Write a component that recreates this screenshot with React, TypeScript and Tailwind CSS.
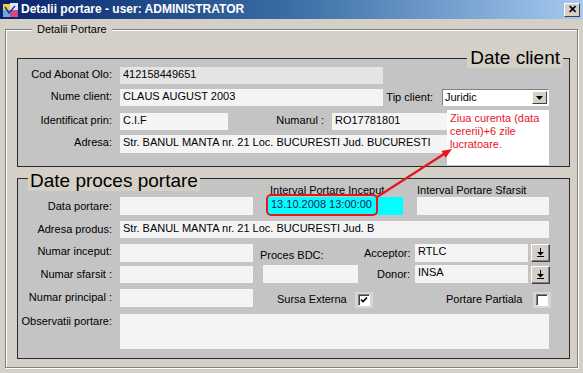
import React from 'react';

const base = "font-['Liberation_Sans',Arial,sans-serif] text-[11px] leading-[13px] text-black";

function Label({ w = 94, className = '', children }: { w?: number; className?: string; children: React.ReactNode }) {
  return (
    <div className={`shrink-0 text-right whitespace-nowrap ${className}`} style={{ width: w }}>
      {children}
    </div>
  );
}

function Box({ w, h = 17, bg = 'bg-[#f4f4f4]', className = '', children }: { w: number; h?: number; bg?: string; className?: string; children?: React.ReactNode }) {
  return (
    <div className={`shrink-0 overflow-hidden whitespace-nowrap pl-[3px] pt-[1px] ${bg} ${className}`} style={{ width: w, height: h }}>
      {children}
    </div>
  );
}

function DropButton() {
  return (
    <div className="ml-[3px] flex h-[18px] w-[19px] shrink-0 items-center justify-center border border-t-white border-l-white border-r-[#404040] border-b-[#404040] bg-[#d4d0c8] shadow-[inset_-1px_-1px_0_#808080]">
      <svg width="9" height="10" viewBox="0 0 9 10">
        <rect x="4" y="0" width="1" height="4" fill="#000" />
        <polygon points="1,4 8,4 4.5,7.5" fill="#000" />
        <rect x="1" y="8" width="7" height="1" fill="#000" />
      </svg>
    </div>
  );
}

function Check({ checked }: { checked?: boolean }) {
  return (
    <div className="flex h-[16px] w-[18px] shrink-0 items-center justify-center bg-[#d6d6d6]">
      <div className="flex h-[12px] w-[12px] items-center justify-center border border-t-[#808080] border-l-[#808080] border-r-white border-b-white bg-white shadow-[inset_1px_1px_0_#404040]">
        {checked && (
          <svg width="8" height="8" viewBox="0 0 8 8">
            <path d="M1 3.5 L3 5.5 L7 1.5" stroke="#000" strokeWidth="1.6" fill="none" />
          </svg>
        )}
      </div>
    </div>
  );
}

export default function App() {
  return (
    <div className={`relative h-[373px] w-[583px] overflow-hidden bg-[#d4d0c8] ${base}`}>
      {/* title bar */}
      <div className="flex h-[19px] items-center bg-gradient-to-r from-[#0a246a] via-[#3a6ea5] to-[#a6caf0] pl-[3px] pr-[3px]">
        <svg width="15" height="14" viewBox="0 0 15 14" className="shrink-0">
          <rect x="0" y="1" width="7" height="6" fill="#f4d03f" />
          <rect x="7" y="0" width="8" height="7" fill="#e0e8ff" />
          <rect x="0" y="7" width="7" height="7" fill="#6fa8dc" />
          <rect x="7" y="7" width="8" height="7" fill="#d04a8a" />
          <path d="M2 4 L6 10 L12 3" stroke="#1a3a9a" strokeWidth="1.5" fill="none" />
        </svg>
        <span className="ml-[3px] font-bold text-[12px] text-white">Detalii portare - user: ADMINISTRATOR</span>
        <div className="ml-auto flex h-[14px] w-[16px] items-center justify-center border border-t-white border-l-white border-r-[#404040] border-b-[#404040] bg-[#d4d0c8] text-[11px] font-bold leading-none">
          ✕
        </div>
      </div>

      {/* outer group box */}
      <div className="relative ml-[5px] mt-[10px] h-[339px] w-[573px] border border-[#808080] pl-[11px] pt-[28px] shadow-[1px_1px_0_#fff,inset_1px_1px_0_#fff]">
        <div className="absolute left-[26px] top-[-7px] bg-[#d4d0c8] px-[5px]">Detalii Portare</div>

        {/* Date client */}
        <div className="relative h-[109px] w-[553px] border border-[#2a2a2a] bg-[#c4c4c4] pt-[8px]">
          <div className="absolute right-[6px] top-[-11px] bg-[#d4d0c8] px-[3px] text-[19px] leading-[20px]">Date client</div>

          <div className="flex items-start">
            <Label className="pt-[1px]">Cod Abonat Olo:</Label>
            <Box w={263} bg="bg-[#e4e4e4]" className="ml-[8px]">412158449651</Box>
          </div>
          <div className="mt-[5px] flex items-start">
            <Label className="pt-[1px]">Nume client:</Label>
            <Box w={263} className="ml-[8px]">CLAUS AUGUST 2003</Box>
            <Label w={50} className="pt-[2px]">Tip client:</Label>
            <div className="ml-[9px] flex h-[17px] w-[107px] items-center border border-t-[#808080] border-l-[#808080] border-r-white border-b-white bg-white pl-[2px]">
              <span className="flex-1">Juridic</span>
              <div className="mr-[1px] flex h-[13px] w-[15px] items-center justify-center border border-t-white border-l-white border-r-[#404040] border-b-[#404040] bg-[#d4d0c8]">
                <svg width="7" height="4" viewBox="0 0 7 4"><polygon points="0,0 7,0 3.5,4" fill="#000" /></svg>
              </div>
            </div>
          </div>
          <div className="mt-[7px] flex items-start">
            <Label className="pt-[1px]">Identificat prin:</Label>
            <Box w={108} className="ml-[8px]">C.I.F</Box>
            <Label w={57} className="ml-[39px] pt-[1px]">Numarul :</Label>
            <Box w={217} className="ml-[8px]">RO17781801</Box>
          </div>
          <div className="mt-[5px] flex items-start">
            <Label className="pt-[1px]">Adresa:</Label>
            <Box w={429} h={18} className="ml-[8px]">Str. BANUL MANTA nr. 21 Loc. BUCURESTI Jud. BUCURESTI</Box>
          </div>

          <div className="absolute left-[429px] top-[51px] h-[55px] w-[102px] bg-white pl-[3px] pt-[2px] text-[#e8141e]">
            Ziua curenta (data cererii)+6 zile lucratoare.
          </div>
        </div>

        {/* Date proces portare */}
        <div className="relative mt-[11px] h-[181px] w-[553px] border border-[#2a2a2a] bg-[#c4c4c4]">
          <div className="absolute left-[10px] top-[-8px] bg-[#d4d0c8] px-[2px] text-[19px] leading-[20px]">Date proces portare</div>

          <div className="flex h-[18px] items-start pt-[5px] leading-[12px]">
            <div className="ml-[252px] w-[147px] whitespace-nowrap">Interval Portare Inceput</div>
            <div className="whitespace-nowrap">Interval Portare Sfarsit</div>
          </div>
          <div className="flex items-start">
            <Label className="pt-[3px]">Data portare:</Label>
            <Box w={133} h={18} className="ml-[8px]" />
            <Box w={135} h={18} bg="bg-[#00ffff]" className="ml-[15px] text-[#102060]">13.10.2008 13:00:00</Box>
            <Box w={132} h={18} className="ml-[14px]" />
          </div>
          <div className="mt-[6px] flex items-start">
            <Label className="pt-[2px]">Adresa produs:</Label>
            <Box w={429} className="ml-[8px]">Str. BANUL MANTA nr. 21 Loc. BUCURESTI Jud. B</Box>
          </div>
          <div className="mt-[6px] flex h-[18px] items-start">
            <Label className="pt-[1px]">Numar inceput:</Label>
            <Box w={133} h={18} className="ml-[8px]" />
            <div className="ml-[7px] w-[104px] self-end whitespace-nowrap">Proces BDC:</div>
            <Label w={46} className="pt-[3px]">Acceptor:</Label>
            <Box w={113} h={18} className="ml-[5px]">RTLC</Box>
            <DropButton />
          </div>
          <div className="mt-[4px] flex items-start">
            <Label className="pt-[2px]">Numar sfarsit :</Label>
            <Box w={133} className="ml-[8px]" />
            <Box w={95} h={18} className="ml-[10px] -mt-[1px]" />
            <Label w={52} className="pt-[2px]">Donor:</Label>
            <Box w={113} h={18} className="ml-[5px] -mt-[1px]">INSA</Box>
            <DropButton />
          </div>
          <div className="mt-[5px] flex items-start">
            <Label className="pt-[2px]">Numar principal :</Label>
            <Box w={133} h={18} className="ml-[8px]" />
            <div className="ml-[24px] w-[78px] whitespace-nowrap pt-[4px]">Sursa Externa</div>
            <div className="mt-[3px]"><Check checked /></div>
            <div className="ml-[73px] w-[87px] whitespace-nowrap pt-[4px]">Portare Partiala</div>
            <div className="mt-[3px]"><Check /></div>
          </div>
          <div className="mt-[6px] flex items-start">
            <Label className="pt-[1px]">Observatii portare:</Label>
            <Box w={429} h={35} className="ml-[8px]" />
          </div>
        </div>
      </div>

      {/* annotations */}
      <div className="absolute left-[266px] top-[194px] h-[22px] w-[112px] rounded-[5px] border-2 border-[#e8141e]" />
      <svg className="absolute left-0 top-0" width="583" height="373">
        <line x1="377" y1="197" x2="444" y2="154" stroke="#e8141e" strokeWidth="2.2" />
        <polygon points="452,149 445.7,157.8 441.4,151" fill="#e8141e" />
      </svg>
    </div>
  );
}
